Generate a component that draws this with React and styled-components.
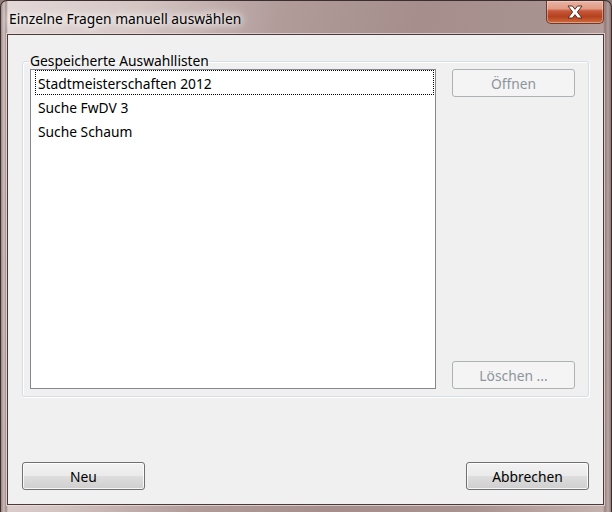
import React from "react";
import styled, { createGlobalStyle } from "styled-components";

const Global = createGlobalStyle`
  html, body { margin: 0; padding: 0; }
  body { width: 612px; height: 512px; overflow: hidden; background: #8e7a78; }
  #root { width: 612px; height: 512px; }
`;

const Frame = styled.div`
  width: 612px;
  height: 512px;
  box-sizing: border-box;
  display: flex;
  flex-direction: column;
  padding: 0 7px 7px 6px;
  border-radius: 7px 7px 0 0;
  border: 1px solid #3a2e2e;
  border-bottom: none;
  background:
    linear-gradient(90deg, rgba(110,85,82,0.6) 0, rgba(170,150,148,0.3) 3px, rgba(110,85,82,0.55) 5px, transparent 7px, transparent calc(100% - 8px), rgba(110,85,82,0.5) calc(100% - 6px), rgba(170,150,148,0.3) calc(100% - 3px), rgba(110,85,82,0.6) 100%),
    linear-gradient(100deg, #e4dad8 0%, #d4c5c3 20%, #b19c9a 40%, #a58e8c 60%, #a99391 80%, #c6b3b0 100%);
`;

const TitleBar = styled.div`
  height: 33px;
  flex: none;
  display: flex;
  align-items: flex-start;
  justify-content: space-between;
`;

const Title = styled.div`
  font-family: "Noto Sans", "Open Sans", sans-serif;
  font-size: 13.8px;
  color: #000;
  padding: 8px 0 0 2px;
  text-shadow: 0 0 6px #fff, 0 0 10px #fff, 0 0 14px rgba(255,255,255,0.9);
`;

const CloseButton = styled.div`
  width: 58px;
  height: 23px;
  box-sizing: border-box;
  border: 1px solid #6b3a30;
  border-top: none;
  border-radius: 0 0 5px 5px;
  background: linear-gradient(180deg, #eab3a3 0%, #e09c86 35%, #c7583a 45%, #b4421f 70%, #d06a3a 100%);
  box-shadow: inset 0 0 0 1px rgba(255,220,210,0.45);
  display: flex;
  align-items: center;
  justify-content: center;
`;

const Client = styled.div`
  flex: 1;
  display: flex;
  flex-direction: column;
  background: #f0f0f0;
  border: 1px solid #4a3b3a;
  box-shadow: 0 0 0 1px rgba(240,225,222,0.7);
  padding: 0 14px 14px 14px;
  font-family: "Noto Sans", "Open Sans", sans-serif;
  font-size: 13.8px;
`;

const Group = styled.fieldset`
  margin: 18px 0 0 0;
  padding: 0 12px 7px 7px;
  border: 1px solid #d5dfe5;
  border-radius: 3px;
  box-shadow: inset 1px 1px 0 #fff, 1px 1px 0 #fff;
  display: grid;
  grid-template-columns: 406px 123px;
  column-gap: 16px;
  min-width: 0;
`;

const Legend = styled.legend`
  padding: 0 1px;
  margin-left: -1px;
  color: #000;
  line-height: 16px;
`;

const ListBox = styled.div`
  height: 320px;
  box-sizing: border-box;
  background: #fff;
  border: 1px solid #828790;
  padding: 0 1px 0 4px;
`;

const Item = styled.div`
  height: 25px;
  box-sizing: border-box;
  display: flex;
  align-items: center;
  padding: 2px 0 0 3px;
  color: #000;
  outline: ${p => (p.focused ? "1px dotted #000" : "none")};
  outline-offset: -1px;
  margin-top: ${p => (p.first ? "0" : "-1px")};
`;

const ButtonCol = styled.div`
  display: flex;
  flex-direction: column;
  justify-content: space-between;
`;

const Button = styled.button`
  width: 123px;
  height: 28px;
  box-sizing: border-box;
  font-family: inherit;
  font-size: 13.8px;
  padding: 0;
  border-radius: 3px;
  cursor: default;
  border: 1px solid ${p => (p.disabled ? "#adb2b5" : "#707070")};
  color: ${p => (p.disabled ? "#8d949c" : "#000")};
  background: ${p =>
    p.disabled
      ? "#f4f4f4"
      : "linear-gradient(180deg, #f2f2f2 0%, #ebebeb 48%, #dddddd 52%, #cfcfcf 100%)"};
  box-shadow: ${p => (p.disabled ? "none" : "inset 0 0 0 1px rgba(255,255,255,0.8)")};
`;

const Spacer = styled.div`
  flex: 1;
`;

const Footer = styled.div`
  display: flex;
  justify-content: space-between;
  align-items: center;
`;

const items = ["Stadtmeisterschaften 2012", "Suche FwDV 3", "Suche Schaum"];

export default function App() {
  return (
    <>
      <Global />
      <Frame>
        <TitleBar>
          <Title>Einzelne Fragen manuell auswählen</Title>
          <CloseButton>
            <svg width="20" height="14" viewBox="0 0 20 14">
              <path
                d="M3 1 H7.5 L10 4.3 L12.5 1 H17 L12.4 7 L17 13 H12.5 L10 9.7 L7.5 13 H3 L7.6 7 Z"
                fill="#fff"
                stroke="#5a2a20"
                strokeWidth="1"
                strokeLinejoin="round"
              />
            </svg>
          </CloseButton>
        </TitleBar>
        <Client>
          <Group>
            <Legend>Gespeicherte Auswahllisten</Legend>
            <ListBox>
              {items.map((t, i) => (
                <Item key={t} focused={i === 0} first={i === 0}>
                  {t}
                </Item>
              ))}
            </ListBox>
            <ButtonCol>
              <Button disabled>Öffnen</Button>
              <Button disabled>Löschen ...</Button>
            </ButtonCol>
          </Group>
          <Spacer />
          <Footer>
            <Button>Neu</Button>
            <Button>Abbrechen</Button>
          </Footer>
        </Client>
      </Frame>
    </>
  );
}
